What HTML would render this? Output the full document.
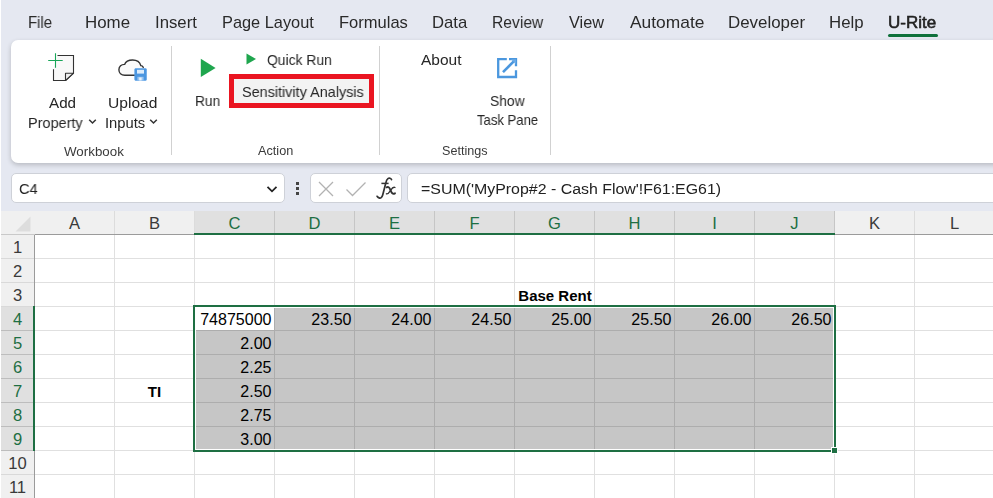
<!DOCTYPE html>
<html><head><meta charset="utf-8">
<style>
*{box-sizing:border-box;margin:0;padding:0}
html,body{width:993px;height:498px;overflow:hidden;background:#e5e8f1;font-family:"Liberation Sans",sans-serif;color:#242424}
#root{position:relative;width:993px;height:498px;overflow:hidden;background:#e5e8f1}
.a{position:absolute}
.t{position:absolute;white-space:nowrap;line-height:24px;transform-origin:0 0;will-change:transform}
#ribbon{position:absolute;left:11px;top:40px;width:995px;height:123px;background:#fff;border-radius:7px;box-shadow:0 2px 5px rgba(0,0,0,.20)}
.sep{position:absolute;top:46px;width:1px;height:109px;background:#d1d1d1}
.box{position:absolute;background:#fff;border:1px solid #ced1d8;border-radius:5px}
.h{position:absolute;height:23px;font-size:16.6px;line-height:26px;text-align:center;white-space:nowrap}
.c{position:absolute;height:24px;font-size:15.7px;line-height:26.2px;text-align:right;white-space:nowrap;color:#000;transform:scaleX(1.022);transform-origin:100% 50%}
.c.b{font-weight:bold;font-size:15px;line-height:25px;transform:none}
</style></head><body><div id="root">
<div class="a" style="left:0;top:0;width:1px;height:498px;background:#fff"></div>
<div class="a" style="left:888px;top:34px;width:50px;height:3px;background:#0f703b;border-radius:1.5px"></div>
<div id="ribbon"></div>
<div class="sep" style="left:171px"></div>
<div class="sep" style="left:379px"></div>
<div class="sep" style="left:550px"></div>
<!-- Add Property icon -->
<svg class="a" style="left:44px;top:50px" width="36" height="36" viewBox="0 0 36 36">
 <path d="M13.5 5.5 H29.5 V23.2 L21.7 30.5 H9.5 V19.2" fill="#f8f8f8" stroke="#333" stroke-width="1.1"/>
 <path d="M29.5 23.2 H21.5 V30.5 Z" fill="#f1f1f1" stroke="#333" stroke-width="1.1" stroke-linejoin="round"/>
 <path d="M11.5 3.2 V17.7 M4.2 10.5 H18.7" fill="none" stroke="#18a558" stroke-width="1.1"/>
</svg>
<!-- chevrons -->
<svg class="a" style="left:87.6px;top:118px" width="9" height="7" viewBox="0 0 9 7"><path d="M1.2 1.7 L4.5 5 L7.8 1.7" fill="none" stroke="#333" stroke-width="1.5"/></svg>
<svg class="a" style="left:148.7px;top:118px" width="9" height="7" viewBox="0 0 9 7"><path d="M1.2 1.7 L4.5 5 L7.8 1.7" fill="none" stroke="#333" stroke-width="1.5"/></svg>
<!-- Upload icon -->
<svg class="a" style="left:114px;top:52px" width="38" height="34" viewBox="0 0 38 34">
 <path d="M21 23.2 H10.8 C7.2 23.2 4.9 20.8 4.9 17.8 C4.9 14.6 7.4 12.3 10.6 12.4 C11.6 9.6 14.6 8 18.6 8 C22.8 8 25.9 10.2 26.8 13.6 C27.8 13.6 28.7 14.2 29.3 15.4" fill="#fafafa" stroke="#333" stroke-width="1.4" stroke-linecap="round"/>
 <rect x="20.7" y="16.5" width="11.8" height="12" rx="1" fill="#4b96e0" stroke="#5aa0e6" stroke-width=".6"/>
 <rect x="23" y="17.8" width="7" height="3.8" fill="#dcecfb"/>
 <rect x="23.4" y="24.8" width="6.2" height="3.7" fill="#9cc6f0"/>
 <rect x="25.2" y="25.5" width="2.4" height="3" fill="#e8f2fc"/>
</svg>
<!-- Run -->
<svg class="a" style="left:198px;top:56px" width="20" height="24" viewBox="0 0 20 24"><path d="M2.8 2.8 L17.6 11.9 L2.8 21 Z" fill="#1fa64e"/></svg>
<svg class="a" style="left:245px;top:52px" width="13" height="14" viewBox="0 0 13 14"><path d="M1.5 1.4 L11 6.9 L1.5 12.4 Z" fill="#1fa64e"/></svg>
<div class="a" style="left:229px;top:74px;width:145px;height:34px;border:5px solid #ea1521;background:#f3f3f3"></div>
<!-- Show Task Pane icon -->
<svg class="a" style="left:495px;top:55.8px" width="24" height="24" viewBox="0 0 24 24">
 <path d="M11.8 3.2 H3.2 V21 H21 V14.2" fill="none" stroke="#4b97de" stroke-width="2.3"/>
 <path d="M8 16.2 L20 4.2" fill="none" stroke="#4b97de" stroke-width="2.6"/>
 <path d="M14 3.2 H21 V10.2" fill="none" stroke="#4b97de" stroke-width="2.3"/>
 <path d="M16 3.2 H21 V8.2 Z" fill="#6aaae6"/>
</svg>
<!-- formula bar -->
<div class="box" style="left:11px;top:173px;width:274px;height:30px"></div>
<svg class="a" style="left:266px;top:184px" width="12" height="10" viewBox="0 0 12 10"><path d="M1.5 2.8 L6 7.3 L10.5 2.8" fill="none" stroke="#222" stroke-width="1.8"/></svg>
<div class="a" style="left:296px;top:182px;width:3px;height:3px;background:#444"></div>
<div class="a" style="left:296px;top:187px;width:3px;height:3px;background:#444"></div>
<div class="a" style="left:296px;top:192px;width:3px;height:3px;background:#444"></div>
<div class="box" style="left:310px;top:173px;width:92px;height:30px"></div>
<svg class="a" style="left:317px;top:180px" width="18" height="18" viewBox="0 0 18 18"><path d="M2 2 L16 16 M16 2 L2 16" stroke="#b2b2b2" stroke-width="1.3" fill="none"/></svg>
<svg class="a" style="left:345px;top:180px" width="22" height="18" viewBox="0 0 22 18"><path d="M1.5 9.5 L7.5 15.5 L20.5 2.5" stroke="#b2b2b2" stroke-width="1.3" fill="none"/></svg>
<svg class="a" style="left:370px;top:172px" width="32" height="30" viewBox="0 0 32 30">
 <path d="M21.5 7.6 C21 6.1 19.2 5.7 17.9 6.6 C16.6 7.5 16.2 9.2 15.8 11 L12.7 23 C12 25.6 10.6 26.5 9.1 25.9 C8.1 25.5 7.5 24.9 7.1 24.3" fill="none" stroke="#333" stroke-width="1.7" stroke-linecap="round"/>
 <path d="M11.4 11.4 H18.6" fill="none" stroke="#333" stroke-width="1.5"/>
 <path d="M16.6 15.3 C18.4 14.3 19.5 15.5 20.6 18.3 C21.7 21.1 22.6 22.6 25 21.3" fill="none" stroke="#333" stroke-width="1.9" stroke-linecap="round"/>
 <path d="M25 15.5 C23.5 14.6 22.1 16 20.6 18.3 C19.1 20.6 18 22.6 16.4 21.8" fill="none" stroke="#333" stroke-width="1.3" stroke-linecap="round"/>
</svg>
<div class="box" style="left:407px;top:173px;width:600px;height:30px"></div>
<div class="a" style="left:1px;top:211px;width:992px;height:287px;background:#fff"></div>
<div class="a" style="left:1px;top:211px;width:34px;height:23px;background:#f0f0f0"></div>
<svg class="a" style="left:15px;top:216px" width="16" height="16"><path d="M15.5 0.5 V15.5 H0.5 Z" fill="#dddddd"/></svg>
<div class="a" style="left:35px;top:211px;width:79px;height:23px;background:#f0f0f0"></div>
<div class="a" style="left:114px;top:211px;width:1px;height:23px;background:#dcdcdc"></div>
<div class="h" style="left:35px;top:211px;width:79px;color:#3a3a3a">A</div>
<div class="a" style="left:115px;top:211px;width:79px;height:23px;background:#f0f0f0"></div>
<div class="a" style="left:194px;top:211px;width:1px;height:23px;background:#dcdcdc"></div>
<div class="h" style="left:115px;top:211px;width:79px;color:#3a3a3a">B</div>
<div class="a" style="left:195px;top:211px;width:79px;height:23px;background:#e0e0e0"></div>
<div class="a" style="left:274px;top:211px;width:1px;height:23px;background:#c6c6c6"></div>
<div class="h" style="left:195px;top:211px;width:79px;color:#1e6f43">C</div>
<div class="a" style="left:275px;top:211px;width:79px;height:23px;background:#e0e0e0"></div>
<div class="a" style="left:354px;top:211px;width:1px;height:23px;background:#c6c6c6"></div>
<div class="h" style="left:275px;top:211px;width:79px;color:#1e6f43">D</div>
<div class="a" style="left:355px;top:211px;width:79px;height:23px;background:#e0e0e0"></div>
<div class="a" style="left:434px;top:211px;width:1px;height:23px;background:#c6c6c6"></div>
<div class="h" style="left:355px;top:211px;width:79px;color:#1e6f43">E</div>
<div class="a" style="left:435px;top:211px;width:79px;height:23px;background:#e0e0e0"></div>
<div class="a" style="left:514px;top:211px;width:1px;height:23px;background:#c6c6c6"></div>
<div class="h" style="left:435px;top:211px;width:79px;color:#1e6f43">F</div>
<div class="a" style="left:515px;top:211px;width:79px;height:23px;background:#e0e0e0"></div>
<div class="a" style="left:594px;top:211px;width:1px;height:23px;background:#c6c6c6"></div>
<div class="h" style="left:515px;top:211px;width:79px;color:#1e6f43">G</div>
<div class="a" style="left:595px;top:211px;width:79px;height:23px;background:#e0e0e0"></div>
<div class="a" style="left:674px;top:211px;width:1px;height:23px;background:#c6c6c6"></div>
<div class="h" style="left:595px;top:211px;width:79px;color:#1e6f43">H</div>
<div class="a" style="left:675px;top:211px;width:79px;height:23px;background:#e0e0e0"></div>
<div class="a" style="left:754px;top:211px;width:1px;height:23px;background:#c6c6c6"></div>
<div class="h" style="left:675px;top:211px;width:79px;color:#1e6f43">I</div>
<div class="a" style="left:755px;top:211px;width:79px;height:23px;background:#e0e0e0"></div>
<div class="a" style="left:834px;top:211px;width:1px;height:23px;background:#c6c6c6"></div>
<div class="h" style="left:755px;top:211px;width:79px;color:#1e6f43">J</div>
<div class="a" style="left:835px;top:211px;width:79px;height:23px;background:#f0f0f0"></div>
<div class="a" style="left:914px;top:211px;width:1px;height:23px;background:#dcdcdc"></div>
<div class="h" style="left:835px;top:211px;width:79px;color:#3a3a3a">K</div>
<div class="a" style="left:915px;top:211px;width:79px;height:23px;background:#f0f0f0"></div>
<div class="a" style="left:994px;top:211px;width:1px;height:23px;background:#dcdcdc"></div>
<div class="h" style="left:915px;top:211px;width:79px;color:#3a3a3a">L</div>
<div class="a" style="left:1px;top:234px;width:34px;height:1px;background:#c9c9c9"></div>
<div class="a" style="left:35px;top:234px;width:958px;height:1px;background:#9b9b9b"></div>
<div class="a" style="left:194px;top:233px;width:641px;height:2px;background:#1e6f43"></div>
<div class="a" style="left:1px;top:235px;width:33px;height:23px;background:#f0f0f0"></div>
<div class="a" style="left:1px;top:258px;width:33px;height:1px;background:#d9d9d9"></div>
<div class="h" style="left:1px;top:235px;width:33px;color:#3a3a3a">1</div>
<div class="a" style="left:1px;top:259px;width:33px;height:23px;background:#f0f0f0"></div>
<div class="a" style="left:1px;top:282px;width:33px;height:1px;background:#d9d9d9"></div>
<div class="h" style="left:1px;top:259px;width:33px;color:#3a3a3a">2</div>
<div class="a" style="left:1px;top:283px;width:33px;height:23px;background:#f0f0f0"></div>
<div class="a" style="left:1px;top:306px;width:33px;height:1px;background:#d9d9d9"></div>
<div class="h" style="left:1px;top:283px;width:33px;color:#3a3a3a">3</div>
<div class="a" style="left:1px;top:307px;width:33px;height:23px;background:#e0e0e0"></div>
<div class="a" style="left:1px;top:330px;width:33px;height:1px;background:#bdbdbd"></div>
<div class="h" style="left:1px;top:307px;width:33px;color:#1e6f43">4</div>
<div class="a" style="left:1px;top:331px;width:33px;height:23px;background:#e0e0e0"></div>
<div class="a" style="left:1px;top:354px;width:33px;height:1px;background:#bdbdbd"></div>
<div class="h" style="left:1px;top:331px;width:33px;color:#1e6f43">5</div>
<div class="a" style="left:1px;top:355px;width:33px;height:23px;background:#e0e0e0"></div>
<div class="a" style="left:1px;top:378px;width:33px;height:1px;background:#bdbdbd"></div>
<div class="h" style="left:1px;top:355px;width:33px;color:#1e6f43">6</div>
<div class="a" style="left:1px;top:379px;width:33px;height:23px;background:#e0e0e0"></div>
<div class="a" style="left:1px;top:402px;width:33px;height:1px;background:#bdbdbd"></div>
<div class="h" style="left:1px;top:379px;width:33px;color:#1e6f43">7</div>
<div class="a" style="left:1px;top:403px;width:33px;height:23px;background:#e0e0e0"></div>
<div class="a" style="left:1px;top:426px;width:33px;height:1px;background:#bdbdbd"></div>
<div class="h" style="left:1px;top:403px;width:33px;color:#1e6f43">8</div>
<div class="a" style="left:1px;top:427px;width:33px;height:23px;background:#e0e0e0"></div>
<div class="a" style="left:1px;top:450px;width:33px;height:1px;background:#bdbdbd"></div>
<div class="h" style="left:1px;top:427px;width:33px;color:#1e6f43">9</div>
<div class="a" style="left:1px;top:451px;width:33px;height:23px;background:#f0f0f0"></div>
<div class="a" style="left:1px;top:474px;width:33px;height:1px;background:#d9d9d9"></div>
<div class="h" style="left:1px;top:451px;width:33px;color:#3a3a3a">10</div>
<div class="a" style="left:1px;top:475px;width:33px;height:23px;background:#f0f0f0"></div>
<div class="a" style="left:1px;top:498px;width:33px;height:1px;background:#d9d9d9"></div>
<div class="h" style="left:1px;top:475px;width:33px;color:#3a3a3a">11</div>
<div class="a" style="left:34px;top:235px;width:1px;height:263px;background:#9b9b9b"></div>
<div class="a" style="left:33px;top:306px;width:2px;height:145px;background:#1e6f43"></div>
<div class="a" style="left:114px;top:235px;width:1px;height:263px;background:#e0e0e0"></div>
<div class="a" style="left:194px;top:235px;width:1px;height:263px;background:#e0e0e0"></div>
<div class="a" style="left:274px;top:235px;width:1px;height:263px;background:#e0e0e0"></div>
<div class="a" style="left:354px;top:235px;width:1px;height:263px;background:#e0e0e0"></div>
<div class="a" style="left:434px;top:235px;width:1px;height:263px;background:#e0e0e0"></div>
<div class="a" style="left:514px;top:235px;width:1px;height:263px;background:#e0e0e0"></div>
<div class="a" style="left:594px;top:235px;width:1px;height:263px;background:#e0e0e0"></div>
<div class="a" style="left:674px;top:235px;width:1px;height:263px;background:#e0e0e0"></div>
<div class="a" style="left:754px;top:235px;width:1px;height:263px;background:#e0e0e0"></div>
<div class="a" style="left:834px;top:235px;width:1px;height:263px;background:#e0e0e0"></div>
<div class="a" style="left:914px;top:235px;width:1px;height:263px;background:#e0e0e0"></div>
<div class="a" style="left:994px;top:235px;width:1px;height:263px;background:#e0e0e0"></div>
<div class="a" style="left:35px;top:258px;width:958px;height:1px;background:#e0e0e0"></div>
<div class="a" style="left:35px;top:282px;width:958px;height:1px;background:#e0e0e0"></div>
<div class="a" style="left:35px;top:306px;width:958px;height:1px;background:#e0e0e0"></div>
<div class="a" style="left:35px;top:330px;width:958px;height:1px;background:#e0e0e0"></div>
<div class="a" style="left:35px;top:354px;width:958px;height:1px;background:#e0e0e0"></div>
<div class="a" style="left:35px;top:378px;width:958px;height:1px;background:#e0e0e0"></div>
<div class="a" style="left:35px;top:402px;width:958px;height:1px;background:#e0e0e0"></div>
<div class="a" style="left:35px;top:426px;width:958px;height:1px;background:#e0e0e0"></div>
<div class="a" style="left:35px;top:450px;width:958px;height:1px;background:#e0e0e0"></div>
<div class="a" style="left:35px;top:474px;width:958px;height:1px;background:#e0e0e0"></div>
<div class="a" style="left:35px;top:498px;width:958px;height:1px;background:#e0e0e0"></div>
<div class="a" style="left:195px;top:307px;width:640px;height:144px;background:#fff"></div>
<div class="a" style="left:196px;top:308px;width:637px;height:141px;background:#c6c6c6"></div>
<div class="a" style="left:195px;top:307px;width:79px;height:23px;background:#fff"></div>
<div class="a" style="left:274px;top:308px;width:1px;height:141px;background:#adadad"></div>
<div class="a" style="left:354px;top:308px;width:1px;height:141px;background:#adadad"></div>
<div class="a" style="left:434px;top:308px;width:1px;height:141px;background:#adadad"></div>
<div class="a" style="left:514px;top:308px;width:1px;height:141px;background:#adadad"></div>
<div class="a" style="left:594px;top:308px;width:1px;height:141px;background:#adadad"></div>
<div class="a" style="left:674px;top:308px;width:1px;height:141px;background:#adadad"></div>
<div class="a" style="left:754px;top:308px;width:1px;height:141px;background:#adadad"></div>
<div class="a" style="left:196px;top:330px;width:637px;height:1px;background:#adadad"></div>
<div class="a" style="left:196px;top:354px;width:637px;height:1px;background:#adadad"></div>
<div class="a" style="left:196px;top:378px;width:637px;height:1px;background:#adadad"></div>
<div class="a" style="left:196px;top:402px;width:637px;height:1px;background:#adadad"></div>
<div class="a" style="left:196px;top:426px;width:637px;height:1px;background:#adadad"></div>
<div class="a" style="left:193px;top:305px;width:643px;height:147px;border:2px solid #1e6f43"></div>
<div class="a" style="left:831px;top:447px;width:7px;height:7px;background:#1e6f43;border:1px solid #fff"></div>
<div class="c" style="left:195px;top:307px;width:76.5px">74875000</div>
<div class="c" style="left:275px;top:307px;width:76.5px">23.50</div>
<div class="c" style="left:355px;top:307px;width:76.5px">24.00</div>
<div class="c" style="left:435px;top:307px;width:76.5px">24.50</div>
<div class="c" style="left:515px;top:307px;width:76.5px">25.00</div>
<div class="c" style="left:595px;top:307px;width:76.5px">25.50</div>
<div class="c" style="left:675px;top:307px;width:76.5px">26.00</div>
<div class="c" style="left:755px;top:307px;width:76.5px">26.50</div>
<div class="c" style="left:195px;top:331px;width:76.5px">2.00</div>
<div class="c" style="left:195px;top:355px;width:76.5px">2.25</div>
<div class="c" style="left:195px;top:379px;width:76.5px">2.50</div>
<div class="c" style="left:195px;top:403px;width:76.5px">2.75</div>
<div class="c" style="left:195px;top:427px;width:76.5px">3.00</div>
<div class="c b" style="left:115px;top:379px;width:79px;text-align:center">TI</div>
<div class="c b" style="left:475px;top:283px;width:160px;text-align:center">Base Rent</div>
<div class="t" style="left:27.85px;top:10.51px;font-size:15.7px;transform:scaleX(0.9530);color:#2a2a2a">File</div>
<div class="t" style="left:84.92px;top:10.51px;font-size:15.7px;transform:scaleX(1.0773);color:#2a2a2a">Home</div>
<div class="t" style="left:154.93px;top:10.51px;font-size:15.7px;transform:scaleX(1.0675);color:#2a2a2a">Insert</div>
<div class="t" style="left:221.56px;top:10.51px;font-size:15.7px;transform:scaleX(1.0417);color:#2a2a2a">Page Layout</div>
<div class="t" style="left:338.85px;top:10.51px;font-size:15.7px;transform:scaleX(1.0537);color:#2a2a2a">Formulas</div>
<div class="t" style="left:431.54px;top:10.51px;font-size:15.7px;transform:scaleX(1.0644);color:#2a2a2a">Data</div>
<div class="t" style="left:492.00px;top:10.51px;font-size:15.7px;transform:scaleX(0.9959);color:#2a2a2a">Review</div>
<div class="t" style="left:569.30px;top:10.51px;font-size:15.7px;transform:scaleX(1.0381);color:#2a2a2a">View</div>
<div class="t" style="left:629.60px;top:10.51px;font-size:15.7px;transform:scaleX(1.1079);color:#2a2a2a">Automate</div>
<div class="t" style="left:727.72px;top:10.51px;font-size:15.7px;transform:scaleX(1.0771);color:#2a2a2a">Developer</div>
<div class="t" style="left:828.63px;top:10.51px;font-size:15.7px;transform:scaleX(1.0717);color:#2a2a2a">Help</div>
<div class="t" style="left:888.02px;top:10.51px;font-size:15.7px;transform:scaleX(1.0817);color:#222;-webkit-text-stroke:0.55px #222">U-Rite</div>
<div class="t" style="left:49.20px;top:90.77px;font-size:14.6px;transform:scaleX(1.0406);color:#262626">Add</div>
<div class="t" style="left:27.71px;top:110.97px;font-size:14.6px;transform:scaleX(0.9917);color:#262626">Property</div>
<div class="t" style="left:107.53px;top:90.77px;font-size:14.6px;transform:scaleX(1.0680);color:#262626">Upload</div>
<div class="t" style="left:104.69px;top:110.97px;font-size:14.6px;transform:scaleX(1.0115);color:#262626">Inputs</div>
<div class="t" style="left:194.56px;top:88.87px;font-size:14.6px;transform:scaleX(0.9394);color:#262626">Run</div>
<div class="t" style="left:266.60px;top:48.27px;font-size:14.6px;transform:scaleX(0.9513);color:#262626">Quick Run</div>
<div class="t" style="left:241.50px;top:80.37px;font-size:14.6px;transform:scaleX(0.9871);color:#262626">Sensitivity Analysis</div>
<div class="t" style="left:420.60px;top:48.27px;font-size:14.6px;transform:scaleX(1.0608);color:#262626">About</div>
<div class="t" style="left:489.60px;top:88.87px;font-size:14.6px;transform:scaleX(0.9495);color:#262626">Show</div>
<div class="t" style="left:476.50px;top:108.47px;font-size:14.6px;transform:scaleX(0.8967);color:#262626">Task Pane</div>
<div class="t" style="left:63.50px;top:139.57px;font-size:11.9px;transform:scaleX(1.1225);color:#3a3a3a">Workbook</div>
<div class="t" style="left:257.80px;top:139.47px;font-size:11.9px;transform:scaleX(1.0668);color:#3a3a3a">Action</div>
<div class="t" style="left:442.20px;top:139.47px;font-size:11.9px;transform:scaleX(1.0600);color:#3a3a3a">Settings</div>
<div class="t" style="left:18.70px;top:176.88px;font-size:15.2px;transform:scaleX(0.9595);color:#222">C4</div>
<div class="t" style="left:421.20px;top:176.88px;font-size:15.2px;transform:scaleX(1.0476);color:#222">=SUM('MyProp#2 - Cash Flow'!F61:EG61)</div>
</div>
</body></html>
